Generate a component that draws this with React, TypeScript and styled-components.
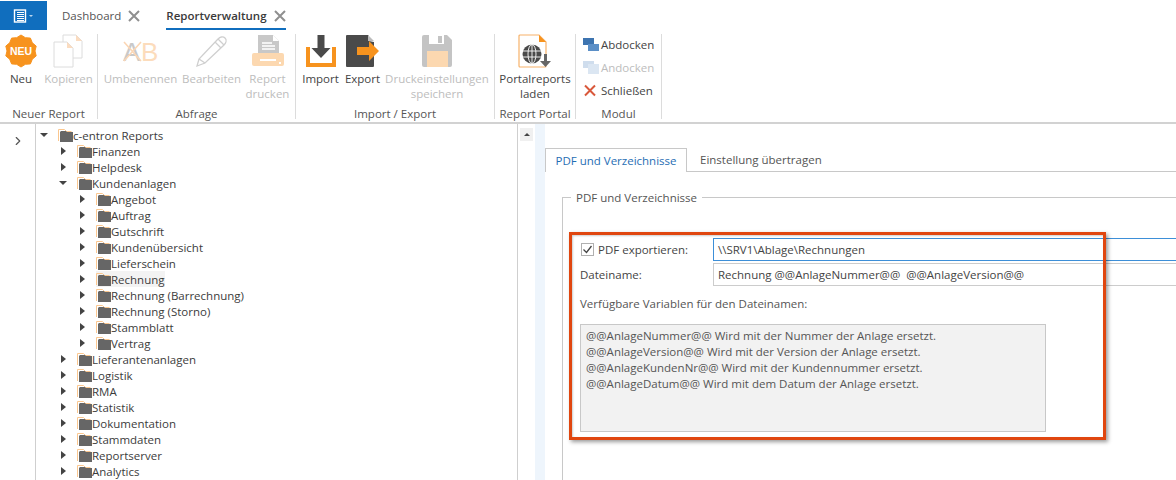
import styled, { createGlobalStyle } from "styled-components";
import { ChevronRight } from "lucide-react";

const Global = createGlobalStyle`
  html, body { margin: 0; padding: 0; background: #fff; }
  body { font-family: "Open Sans", "Liberation Sans", sans-serif; font-size: 11.5px; color: #444; }
`;

const Page = styled.div`
  width: 1176px;
  height: 480px;
  overflow: hidden;
  display: flex;
  flex-direction: column;
  position: relative;
`;

/* top tabs */
const TopBar = styled.div`
  height: 30px;
  display: flex;
  align-items: flex-start;
  flex: none;
`;
const AppButton = styled.div`
  width: 47px;
  height: 29px;
  margin-top: 1px;
  background: #106ebe;
  display: flex;
  align-items: center;
  justify-content: center;
`;
const TopTab = styled.div<{ $active?: boolean }>`
  display: flex;
  align-items: center;
  gap: 7px;
  height: 27px;
  margin-top: 3px;
  margin-left: ${(p) => (p.$active ? "26px" : "15px")};
  box-sizing: border-box;
  font-size: 11.5px;
  font-weight: ${(p) => (p.$active ? 600 : 400)};
  color: ${(p) => (p.$active ? "#3a3a3a" : "#555")};
  border-bottom: 2px solid ${(p) => (p.$active ? "#106ebe" : "transparent")};
`;

/* ribbon */
const Ribbon = styled.div`
  height: 94px;
  flex: none;
  display: flex;
  border-bottom: 2px solid #d2d2d2;
  box-sizing: border-box;
  padding-top: 4px;
`;
const Group = styled.div<{ $w: number }>`
  width: ${(p) => p.$w}px;
  height: 85px;
  border-right: 1px solid #dcdcdc;
  display: flex;
  flex-direction: column;
  box-sizing: border-box;
  flex: none;
`;
const GroupBody = styled.div`
  flex: 1;
  min-height: 0;
  display: flex;
`;
const GroupLabel = styled.div`
  height: 12px;
  text-align: center;
  line-height: 14px;
  color: #555;
`;
const BigButton = styled.div<{ $w: number; $off?: boolean }>`
  width: ${(p) => p.$w}px;
  flex: none;
  display: flex;
  flex-direction: column;
  align-items: center;
  text-align: center;
  line-height: 15px;
  color: ${(p) => (p.$off ? "#bdbdbd" : "#444")};
  svg { height: 34px; margin-bottom: 3px; flex: none; }
`;
const SideStack = styled.div`
  display: flex;
  flex-direction: column;
  margin-top: -1px;
  padding-left: 7px;
`;
const SideButton = styled.div<{ $off?: boolean }>`
  height: 23px;
  display: flex;
  align-items: center;
  gap: 2px;
  color: ${(p) => (p.$off ? "#bdbdbd" : "#444")};
`;

/* main area */
const Main = styled.div`
  flex: 1;
  display: flex;
  min-height: 0;
`;
const Rail = styled.div`
  width: 36px;
  flex: none;
  border-right: 1px solid #cfcfcf;
  display: flex;
  justify-content: center;
  padding: 10px 0 0 1px;
  box-sizing: border-box;
  color: #555;
`;
const Tree = styled.div`
  width: 481px;
  flex: none;
  padding-top: 3px;
  border-right: 1px solid #cfcfcf;
  overflow: hidden;
`;
const Row = styled.div<{ $level: number }>`
  height: 16px;
  display: flex;
  align-items: center;
  padding-left: ${(p) => 4 + p.$level * 19}px;
  color: #3c3c3c;
  white-space: nowrap;
`;
const Arrow = styled.span<{ $open?: boolean }>`
  width: 0;
  height: 0;
  flex: none;
  ${(p) =>
    p.$open
      ? `border-left: 4px solid transparent; border-right: 4px solid transparent; border-top: 4px solid #444; margin-right: 10px;`
      : `border-top: 4.5px solid transparent; border-bottom: 4.5px solid transparent; border-left: 5px solid #444; margin: 0 11px 0 2px;`}
`;
const Label = styled.span<{ $hover?: boolean }>`
  display: flex;
  align-items: center;
  height: 16px;
  background: ${(p) => (p.$hover ? "#f3f3f3" : "transparent")};
`;
const Scroll = styled.div`
  width: 17px;
  flex: none;
  padding: 4px 0 0 2px;
  box-sizing: border-box;
`;
const ScrollUp = styled.div`
  width: 13px;
  height: 13px;
  background: #f0f0f0;
  display: flex;
  align-items: center;
  justify-content: center;
  &::after {
    content: "";
    border-left: 3.5px solid transparent;
    border-right: 3.5px solid transparent;
    border-bottom: 3.5px solid #444;
  }
`;
const Strip = styled.div`
  width: 10px;
  flex: none;
  background: #eef5fc;
`;
const Panel = styled.div`
  flex: 1;
  min-width: 0;
  overflow: hidden;
  padding-top: 24px;
  position: relative;
`;
const PanelTabs = styled.div`
  display: flex;
  height: 23px;
  border-bottom: 1px solid #c8c8c8;
`;
const PanelTab = styled.div<{ $active?: boolean }>`
  height: 23px;
  box-sizing: border-box;
  display: flex;
  align-items: center;
  ${(p) =>
    p.$active
      ? `width: 142px; justify-content: center; color: #1f6eb4; background: #fff; border: 1px solid #c8c8c8; border-bottom: 0; height: 24px;`
      : `padding-left: 13px; color: #555;`}
`;
const GroupBox = styled.fieldset`
  margin: 18px 0 0 17px;
  width: 700px;
  height: 320px;
  box-sizing: border-box;
  border: 1px solid #c8c8c8;
  padding: 33px 0 0 17px;
`;
const Legend = styled.legend`
  margin-left: -9px;
  padding: 0 5px;
  color: #555;
`;
const FormGrid = styled.div`
  display: grid;
  grid-template-columns: 133px 1fr;
  row-gap: 2px;
  align-items: center;
  color: #444;
`;
const CheckRow = styled.div`
  display: flex;
  align-items: center;
  gap: 4px;
`;
const Check = styled.span`
  width: 13px;
  height: 13px;
  box-sizing: border-box;
  margin-left: 1px;
  border: 1px solid #b0b0b0;
  flex: none;
  display: flex;
  align-items: center;
  justify-content: center;
`;
const Field = styled.div<{ $focus?: boolean }>`
  height: 23px;
  box-sizing: border-box;
  border: 1px solid ${(p) => (p.$focus ? "#3d8fd8" : "#cccccc")};
  display: flex;
  align-items: center;
  padding-left: 4px;
  color: #444;
`;
const Hint = styled.div`
  margin-top: 10px;
  line-height: 16px;
  color: #555;
`;
const VarBox = styled.div`
  margin-top: 12px;
  width: 466px;
  height: 108px;
  box-sizing: border-box;
  background: #f2f2f2;
  border: 1px solid #c8c8c8;
  padding: 3px 5px;
  line-height: 16px;
  color: #555;
`;
const Callout = styled.div`
  position: absolute;
  left: 569px;
  top: 232px;
  width: 537px;
  height: 208px;
  box-sizing: border-box;
  border: 3.5px solid #e0460f;
  box-shadow: 2px 2px 4px rgba(0, 0, 0, 0.4), inset 1px 1px 2px rgba(0, 0, 0, 0.2);
  pointer-events: none;
`;

/* icons */
const TabClose = () => (
  <svg width="12" height="12" viewBox="0 0 12 12">
    <path d="M1 1l10 10M11 1L1 11" stroke="#8f8f8f" strokeWidth="2" />
  </svg>
);
const MenuIcon = () => (
  <svg width="22" height="14" viewBox="0 0 22 14">
    <rect x="1.5" y="1" width="11" height="12" fill="none" stroke="#fff" strokeWidth="1.4" />
    <path d="M4 3.5h7M4 5.5h7M4 7.5h7M4 9.5h7M4 11.5h7" stroke="#fff" strokeWidth="1" />
    <path d="M16 6h4l-2 2z" fill="#b9d5ee" />
  </svg>
);

const burst = () => {
  const pts: string[] = [];
  const n = 20;
  for (let i = 0; i < n; i++) {
    const r = i % 2 ? 14 : 16;
    const a = (i / n) * Math.PI * 2;
    pts.push(`${(17 + r * Math.sin(a)).toFixed(1)},${(17 - r * Math.cos(a)).toFixed(1)}`);
  }
  return pts.join(" ");
};

const NewIcon = () => (
  <svg width="34" height="34" viewBox="0 0 34 34">
    <polygon points={burst()} fill="#f7931e" stroke="#f7931e" strokeLinejoin="round" strokeWidth="1" />
    <text x="17" y="21" textAnchor="middle" fontFamily="Liberation Sans" fontWeight="700" fontSize="10.5" fill="#fff">NEU</text>
  </svg>
);
const CopyIcon = () => (
  <svg width="34" height="34" viewBox="0 0 34 34">
    <path d="M11 1h13l6 6v17H11z" fill="#fff" stroke="#dcdcdc" />
    <path d="M24 1v6h6z" fill="#fbdcc0" />
    <path d="M2 8h13l6 6v19H2z" fill="#fff" stroke="#dcdcdc" />
    <path d="M15 8v6h6z" fill="#fbdcc0" />
  </svg>
);
const RenameIcon = () => (
  <svg width="36" height="34" viewBox="0 0 36 34">
    <text x="0" y="27" fontFamily="Liberation Sans" fontSize="26" fill="#c9c9c9">A</text>
    <text x="18" y="27" fontFamily="Liberation Sans" fontSize="26" fill="#fcdcbc">B</text>
    <path d="M1 8l17 19M18 8L1 27" stroke="#fbd6b4" strokeWidth="1.6" />
  </svg>
);
const PenIcon = () => (
  <svg width="34" height="34" viewBox="0 0 34 34" fill="none" stroke="#cfcfcf" strokeWidth="1.3">
    <path d="M2 32l2-7L23 5c2-2 5-3 7-1s1 5-1 7L10 29z" />
    <path d="M4 25l6 4M20 8l6 6M23 5l6 6" />
  </svg>
);
const PrintIcon = () => (
  <svg width="34" height="34" viewBox="0 0 34 34">
    <path d="M7 1h15l6 6v15H7z" fill="#c8c8c8" />
    <path d="M22 1v6h6z" fill="#fff" />
    <path d="M11 9h10M11 12h13M11 15h13" stroke="#fff" strokeWidth="1.3" />
    <rect x="1" y="19" width="32" height="13" rx="2" fill="#fcd8b0" />
    <path d="M9 26h16" stroke="#fff" strokeWidth="2" />
    <rect x="28" y="28" width="2" height="2" fill="#fff" />
  </svg>
);
const ImportIcon = () => (
  <svg width="30" height="34" viewBox="0 0 30 34">
    <path d="M2 13v18h26V13" fill="none" stroke="#f7931e" strokeWidth="4" />
    <path d="M11.500 1h7v13h6L15 24 5.500 14h6z" fill="#4a4a4a" />
  </svg>
);
const ExportIcon = () => (
  <svg width="34" height="34" viewBox="0 0 34 34">
    <path d="M0 2a1 1 0 0 1 1-1h21l1 1v5l5 1v24a1 1 0 0 1-1 1H1a1 1 0 0 1-1-1z" fill="#4a4a4a" />
    <path d="M22 1l6 6h-6z" fill="#bbb" />
    <path d="M11 13h12V7l10 10-10 10v-6H11z" fill="#f7931e" />
  </svg>
);
const SaveIcon = () => (
  <svg width="32" height="34" viewBox="0 0 32 34">
    <path d="M1 3a2 2 0 0 1 2-2h23l5 5v25a2 2 0 0 1-2 2H3a2 2 0 0 1-2-2z" fill="#c4c4c4" />
    <rect x="8" y="1" width="15" height="9" fill="#fff" />
    <rect x="17" y="2" width="4" height="7" fill="#c4c4c4" />
    <rect x="6" y="17" width="21" height="16" fill="#fcd8b0" />
  </svg>
);
const PortalIcon = () => (
  <svg width="34" height="34" viewBox="0 0 34 34">
    <path d="M1 2a1 1 0 0 1 1-1h19l7 7v24a1 1 0 0 1-1 1H2a1 1 0 0 1-1-1z" fill="#fff" stroke="#f7b26a" strokeWidth="1.2" />
    <path d="M21 1l7 7h-7z" fill="#f7931e" />
    <circle cx="14" cy="20" r="9.500" fill="#4a4a4a" />
    <g fill="none" stroke="#fff" strokeWidth="0.9">
      <ellipse cx="14" cy="20" rx="4" ry="9.500" />
      <path d="M14 10.500v19M5 17h18M5 23h18" />
    </g>
    <path d="M26 20h3v7h4l-5.500 6-5.500-6h4z" fill="#666" />
  </svg>
);
const DockIcon = ({ off }: { off?: boolean }) => (
  <svg width="16" height="13" viewBox="0 0 16 13">
    <rect x="0" y="0" width="11" height="7" fill={off ? "#cfdded" : "#3d74b0"} />
    <rect x="5" y={off ? 3 : 6} width="11" height={off ? 10 : 7} fill={off ? "#dbe6f2" : "#5b8fc7"} />
  </svg>
);
const CloseIcon = () => (
  <svg width="16" height="13" viewBox="0 0 16 13">
    <path d="M2 1.500l10 10M12 1.500l-10 10" stroke="#d9583b" strokeWidth="2" />
  </svg>
);
const FolderShape = styled.svg`
  flex: none;
`;
const FolderIcon = () => (
  <FolderShape width="15" height="16" viewBox="0 0 15 16">
    <path d="M0.500 14V2.500h6l2 2h5" fill="none" stroke="#fbc78f" strokeWidth="1" />
    <rect x="2" y="5" width="13" height="10" fill="#666" />
    <path d="M2 5l1-1h5l1 1z" fill="#666" />
  </FolderShape>
);

const TreeItem = ({ level, open, text, hover }: { level: number; open?: boolean; text: string; hover?: boolean }) => (
  <Row $level={level}>
    <Arrow $open={open} />
    <Label $hover={hover}>
      <FolderIcon />
      {text}
    </Label>
  </Row>
);

const treeData: { level: number; text: string; open?: boolean; hover?: boolean }[] = [
  { level: 0, text: "c-entron Reports", open: true },
  { level: 1, text: "Finanzen" },
  { level: 1, text: "Helpdesk" },
  { level: 1, text: "Kundenanlagen", open: true },
  { level: 2, text: "Angebot" },
  { level: 2, text: "Auftrag" },
  { level: 2, text: "Gutschrift" },
  { level: 2, text: "Kundenübersicht" },
  { level: 2, text: "Lieferschein" },
  { level: 2, text: "Rechnung", hover: true },
  { level: 2, text: "Rechnung (Barrechnung)" },
  { level: 2, text: "Rechnung (Storno)" },
  { level: 2, text: "Stammblatt" },
  { level: 2, text: "Vertrag" },
  { level: 1, text: "Lieferantenanlagen" },
  { level: 1, text: "Logistik" },
  { level: 1, text: "RMA" },
  { level: 1, text: "Statistik" },
  { level: 1, text: "Dokumentation" },
  { level: 1, text: "Stammdaten" },
  { level: 1, text: "Reportserver" },
  { level: 1, text: "Analytics" },
];

export default function App() {
  return (
    <Page>
      <Global />
      <TopBar>
        <AppButton>
          <MenuIcon />
        </AppButton>
        <TopTab>
          Dashboard <TabClose />
        </TopTab>
        <TopTab $active>
          Reportverwaltung <TabClose />
        </TopTab>
      </TopBar>

      <Ribbon>
        <Group $w={98}>
          <GroupBody>
            <BigButton $w={42}><NewIcon />Neu</BigButton>
            <BigButton $w={53} $off><CopyIcon />Kopieren</BigButton>
          </GroupBody>
          <GroupLabel>Neuer Report</GroupLabel>
        </Group>
        <Group $w={198}>
          <GroupBody>
            <BigButton $w={85} $off><RenameIcon />Umbenennen</BigButton>
            <BigButton $w={57} $off><PenIcon />Bearbeiten</BigButton>
            <BigButton $w={55} $off><PrintIcon />Report<br />drucken</BigButton>
          </GroupBody>
          <GroupLabel>Abfrage</GroupLabel>
        </Group>
        <Group $w={199}>
          <GroupBody>
            <BigButton $w={49}><ImportIcon />Import</BigButton>
            <BigButton $w={35}><ExportIcon />Export</BigButton>
            <BigButton $w={114} $off><SaveIcon />Druckeinstellungen<br />speichern</BigButton>
          </GroupBody>
          <GroupLabel>Import / Export</GroupLabel>
        </Group>
        <Group $w={81}>
          <GroupBody>
            <BigButton $w={80}><PortalIcon />Portalreports<br />laden</BigButton>
          </GroupBody>
          <GroupLabel>Report Portal</GroupLabel>
        </Group>
        <Group $w={86}>
          <GroupBody>
            <SideStack>
              <SideButton><DockIcon />Abdocken</SideButton>
              <SideButton $off><DockIcon off />Andocken</SideButton>
              <SideButton><CloseIcon />Schließen</SideButton>
            </SideStack>
          </GroupBody>
          <GroupLabel>Modul</GroupLabel>
        </Group>
      </Ribbon>

      <Main>
        <Rail>
          <ChevronRight size={14} strokeWidth={2} />
        </Rail>
        <Tree>
          {treeData.map((t) => (
            <TreeItem key={t.text} {...t} />
          ))}
        </Tree>
        <Scroll>
          <ScrollUp />
        </Scroll>
        <Strip />
        <Panel>
          <PanelTabs>
            <PanelTab $active>PDF und Verzeichnisse</PanelTab>
            <PanelTab>Einstellung übertragen</PanelTab>
          </PanelTabs>
          <GroupBox>
            <Legend>PDF und Verzeichnisse</Legend>
            <FormGrid>
              <CheckRow>
                <Check>
                  <svg width="11" height="11" viewBox="0 0 11 11">
                    <path d="M1.500 5.500l3 3 5-6.500" fill="none" stroke="#444" strokeWidth="1.3" />
                  </svg>
                </Check>
                PDF exportieren:
              </CheckRow>
              <Field $focus>\\SRV1\Ablage\Rechnungen</Field>
              <span>Dateiname:</span>
              <Field>Rechnung @@AnlageNummer@@&nbsp; @@AnlageVersion@@</Field>
            </FormGrid>
            <Hint>Verfügbare Variablen für den Dateinamen:</Hint>
            <VarBox>
              @@AnlageNummer@@ Wird mit der Nummer der Anlage ersetzt.<br />
              @@AnlageVersion@@ Wird mit der Version der Anlage ersetzt.<br />
              @@AnlageKundenNr@@ Wird mit der Kundennummer ersetzt.<br />
              @@AnlageDatum@@ Wird mit dem Datum der Anlage ersetzt.
            </VarBox>
          </GroupBox>
        </Panel>
      </Main>
      <Callout />
    </Page>
  );
}
